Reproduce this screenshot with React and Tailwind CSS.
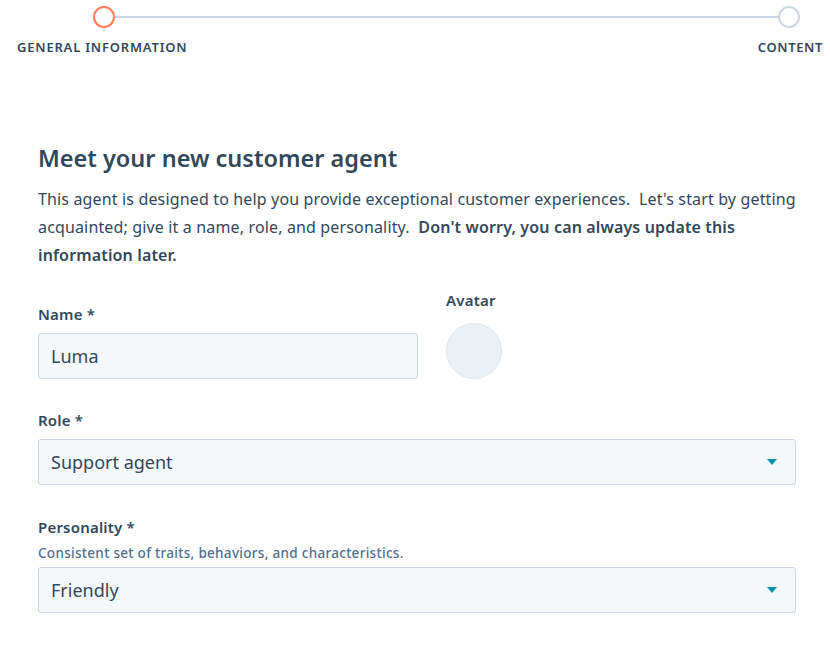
const font = { fontFamily: '"Noto Sans", "Open Sans", sans-serif' };

function Caret() {
  return (
    <svg width="10" height="6" viewBox="0 0 10 6" className="shrink-0">
      <path d="M0 0 H10 L5 6 Z" fill="#0091ae" />
    </svg>
  );
}

function Label({ children }) {
  return <div className="text-[15px] font-semibold tracking-[0.2px] text-[#33475b] leading-[20px]">{children}</div>;
}

function Select({ value }) {
  return (
    <div className="flex h-[46px] items-center justify-between rounded-[3px] border border-[#cbd6e2] bg-[#f5f8fa] pl-3 pr-[18px] text-[18px] text-[#33475b]">
      <span>{value}</span>
      <Caret />
    </div>
  );
}

export default function App() {
  return (
    <div className="min-h-screen bg-white text-[#33475b]" style={font}>
      <div className="relative h-[70px]">
        <div className="absolute left-[114px] right-[51px] top-[16px] h-[2px] bg-[#cbd6e2]" />
        <div className="absolute left-[93px] top-[6px] h-[22px] w-[22px] rounded-full border-2 border-[#ff7a59] bg-white" />
        <div className="absolute left-[778px] top-[6px] h-[22px] w-[22px] rounded-full border-2 border-[#cbd6e2] bg-white" />
        <div className="absolute left-[17px] top-[38px] text-[13px] font-semibold tracking-[0.8px] uppercase">General information</div>
        <div className="absolute right-[7px] top-[38px] text-[13px] font-semibold tracking-[0.6px] uppercase">Content</div>
      </div>

      <div className="ml-[38px] w-[758px] pt-[73px]">
        <h1 className="text-[23.5px] font-semibold leading-[30px]">Meet your new customer agent</h1>
        <p className="mt-[12px] text-[16px] tracking-[0.15px] leading-[28px]">
          This agent is designed to help you provide exceptional customer experiences.&nbsp; Let's start by getting acquainted; give it a name, role, and personality.&nbsp; <b className="font-semibold">Don't worry, you can always update this information later.</b>
        </p>

        <div className="mt-[21px] flex gap-[28px]">
          <div className="w-[380px] pt-[14px]">
            <Label>Name *</Label>
            <div className="mt-[9px] flex h-[46px] items-center rounded-[3px] border border-[#cbd6e2] bg-[#f5f8fa] px-3 text-[18px]">Luma</div>
          </div>
          <div>
            <Label>Avatar</Label>
            <div className="mt-[13px] h-[56px] w-[56px] rounded-full border border-[#dfe3eb] bg-[#eaf0f6]" />
          </div>
        </div>

        <div className="mt-[31px]">
          <Label>Role *</Label>
          <div className="mt-[9px]"><Select value="Support agent" /></div>
        </div>

        <div className="mt-[32px]">
          <Label>Personality *</Label>
          <div className="mt-[7px] text-[13.5px] font-medium tracking-[0.3px] leading-[18px] text-[#516f90]">Consistent set of traits, behaviors, and characteristics.</div>
          <div className="mt-[5px]"><Select value="Friendly" /></div>
        </div>
      </div>
    </div>
  );
}
